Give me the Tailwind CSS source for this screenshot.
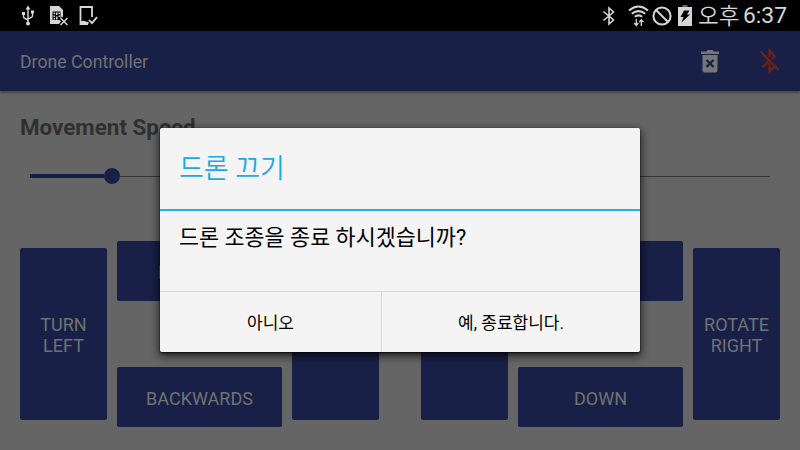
<!DOCTYPE html>
<html lang="ko">

<head>
    <meta charset="UTF-8">
    <meta name="viewport" content="width=device-width, initial-scale=1.0">
    <title>Drone Controller</title>
    <script src="https://cdn.jsdelivr.net/npm/@tailwindcss/browser@4"></script>
</head>

<body class="w-[800px] h-[450px] overflow-hidden bg-[#656565] font-[Roboto,'Noto_Sans_CJK_KR',sans-serif]">
    <div class="relative flex flex-col w-[800px] h-[450px] overflow-hidden">

        <!-- STATUS BAR -->
        <div class="flex items-center justify-between h-[31px] shrink-0 bg-black text-[#d6d6d6] pl-[21px] pr-[13px]">
            <div class="flex items-center gap-[14px]">
                <svg class="w-[14px] h-[22px]" viewBox="0 0 14 22" fill="none" stroke="currentColor" stroke-width="1.4">
                    <path d="M7 3v16M2.5 8.5v3q0 1.500 1.500 2l3 1.500M11.500 7v4q0 1-1.500 1.600l-3 1.300" />
                    <path d="M7 0l2.500 4h-5zM1 6.500h3v3H1z" fill="currentColor" stroke="none" transform="translate(0 .5)" />
                    <path d="M10 5.500h3v3h-3z" fill="currentColor" stroke="none" />
                    <circle cx="7" cy="18.500" r="2" fill="currentColor" stroke="none" />
                </svg>
                <svg class="w-[19px] h-[22px]" viewBox="0 0 19 22">
                    <path d="M1 1h9l4 4v9l-3 5H1z" fill="currentColor" />
                    <path d="M3.500 6.500h8V15h-8z" fill="#000" />
                    <path d="M4.500 7.500H6V9H4.500zM7 7.500h1.500V10H7zM9.500 7.500H11V9H9.500zM4.500 10.500H6V12H4.500zM9.500 10.500H11V12H9.500zM4.500 13H6v1.500H4.500zM7 11.500h1.500v3H7z" fill="currentColor" />
                    <path d="M11.500 13l7 7M18.500 13l-7 7" stroke="#000" stroke-width="4" />
                    <path d="M11.500 13l7 7M18.500 13l-7 7" stroke="currentColor" stroke-width="1.500" />
                </svg>
                <svg class="-ml-[3px] w-[19px] h-[22px]" viewBox="0 0 19 22" fill="none" stroke="currentColor">
                    <path d="M13 12V2H1.500v17H9" stroke-width="1.800" />
                    <path d="M1.500 17q2-2 4-1t4 1v2h-8z" fill="currentColor" stroke="none" />
                    <path d="M10 15l3 3.200 5-6" stroke-width="1.800" />
                </svg>
            </div>
            <div class="flex items-center">
                <svg class="w-[14px] h-[20px]" viewBox="0 0 14 20" fill="none" stroke="currentColor" stroke-width="1.600">
                    <path d="M1.500 5.500l10 8.500L7 18V2l4.500 4-10 8.500" />
                </svg>
                <svg class="ml-[12px] w-[21px] h-[22px]" viewBox="0 0 21 22" fill="none" stroke="currentColor" stroke-width="2.100">
                    <path d="M1 5.500q9.500-8 19 0M3.800 8.800q6.700-5.500 13.400 0M6.800 11.800q3.700-3 7.400 0" />
                    <path d="M8.300 14v6M6.200 18l2.100 2.500 2.100-2.500M13.300 21v-6M11.200 17.200l2.100-2.500 2.100 2.500" stroke-width="1.300" />
                </svg>
                <svg class="ml-[3px] w-[20px] h-[20px]" viewBox="0 0 20 20" fill="none" stroke="currentColor" stroke-width="2">
                    <circle cx="10" cy="10" r="8.600" />
                    <path d="M4 4l12 12" />
                </svg>
                <svg class="ml-[6px] w-[14px] h-[21px]" viewBox="0 0 14 21">
                    <path d="M4.500 0h5v2h-5z" fill="#666" />
                    <path d="M0 2h14v19H0z" fill="currentColor" />
                    <path d="M6 5.500h5.500L9 9.500h3L3.500 17.500l2-5.500H2.500z" fill="#000" />
                </svg>
                <div class="ml-[6px] flex items-center leading-[30px] whitespace-nowrap">
                    <span class="w-[41px] text-[22.5px] font-[350]">오후</span>
                    <span class="ml-[4px] text-[22.8px] leading-[28px]">6:37</span>
                </div>
            </div>
        </div>

        <!-- APP BAR -->
        <div class="relative flex items-center h-[60px] shrink-0 bg-[#192048] px-5 shadow-[0_1px_3px_rgba(0,0,0,0.5)]">
            <h1 class="flex-1 pt-[2px] text-[17.7px] text-[#717171]">Drone Controller</h1>
            <svg class="w-[18px] h-[24px] mr-[40px]" viewBox="0 0 18 24">
                <path d="M0 2.500h5.500L6.500 1h5l1 1.500H18V5H0z" fill="#757575" />
                <path d="M1.500 6h15v15.500q0 2-2 2h-11q-2 0-2-2z" fill="#757575" />
                <path d="M5.500 11l7 7M12.500 11l-7 7" stroke="#192048" stroke-width="2.400" />
            </svg>
            <svg class="w-[21px] h-[26px]" viewBox="0 0 21 26" fill="none" stroke="#6a2119" stroke-width="2.400">
                <path d="M1.500 3.500l18 18.500M3.500 19.500l6.500-6.500M10.500 9V3l5 5-2.500 2.800M10.500 15v8.500l5-5" />
            </svg>
        </div>

        <!-- MOVEMENT SPEED -->
        <div class="px-5 pt-[22px]">
            <h2 class="text-[22.4px] leading-[28px] font-bold text-[#303030]">Movement Speed</h2>
            <div class="flex items-center h-[16px] mt-[27px] mx-[10px]">
                <div class="w-[74px] h-1 bg-[#192048]"></div>
                <div class="w-[16px] h-[16px] rounded-full bg-[#192048]"></div>
                <div class="flex-1 h-px bg-[#363636]"></div>
            </div>
        </div>

        <!-- CONTROLS -->
        <div class="flex justify-between px-5 mt-[57px] text-[18px] leading-[21px] text-center text-[#717171]">
            <div class="flex items-center gap-[10px]">
                <button class="w-[87px] h-[172px] pt-[2px] rounded-[2px] bg-[#192048]">TURN<br>LEFT</button>
                <div class="flex flex-col gap-[66px]">
                    <button class="w-[165px] h-[60px] pt-[2px] rounded-[2px] bg-[#192048]">FORWARD</button>
                    <button class="w-[165px] h-[60px] pt-[2px] rounded-[2px] bg-[#192048]">BACKWARDS</button>
                </div>
                <button class="w-[87px] h-[172px] rounded-[2px] bg-[#192048]"></button>
            </div>
            <div class="flex items-center gap-[10px]">
                <button class="w-[87px] h-[172px] rounded-[2px] bg-[#192048]"></button>
                <div class="flex flex-col gap-[66px]">
                    <button class="w-[165px] h-[60px] rounded-[2px] bg-[#192048]"></button>
                    <button class="w-[165px] h-[60px] pt-[2px] rounded-[2px] bg-[#192048]">DOWN</button>
                </div>
                <button class="w-[87px] h-[172px] pt-[2px] rounded-[2px] bg-[#192048]">ROTATE<br>RIGHT</button>
            </div>
        </div>

        <!-- DIALOG -->
        <div class="absolute left-[160px] top-[128px] w-[480px] h-[224px] flex flex-col rounded-[2px] bg-[#f4f4f4] shadow-[0_3px_8px_1px_rgba(0,0,0,0.7),0_1px_2px_rgba(0,0,0,0.7)]">
            <div class="flex items-center h-[83px] pt-px px-[19px] border-b-[2px] border-[#2caee0] text-[27px] text-[#1fa9de] font-[350]">드론 끄기</div>
            <div class="flex-1 px-[19px] pt-[11px] text-[21.8px] leading-[32px] text-black">드론 조종을 종료 하시겠습니까?</div>
            <div class="flex h-[61px] border-t border-[#d9d9d9] text-[17px] text-black">
                <button class="w-[222px] pt-[3px] border-r border-[#d9d9d9]">아니오</button>
                <button class="flex-1 pt-[3px]">예, 종료합니다.</button>
            </div>
        </div>
    </div>
</body>

</html>
